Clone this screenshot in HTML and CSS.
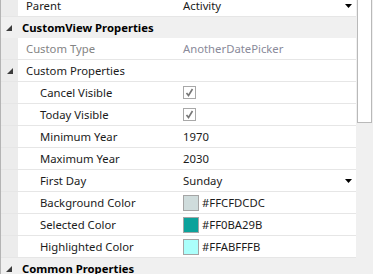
FILE: index.html
```html
<!DOCTYPE html>
<html lang="en">
<head>
    <meta charset="UTF-8">
    <title>Properties</title>
    <link rel="stylesheet" href="styles.css">
</head>
<body>
<div class="property-grid">
    <div class="rows">
        <div class="row">
            <span class="gutter"></span>
            <span class="name">Parent</span>
            <span class="value">Activity<svg class="drop" width="7" height="4"><polygon points="0,0 7,0 3.5,4"/></svg></span>
        </div>
        <div class="category">
            <svg class="expander" width="6" height="6"><polygon points="6,0 6,6 0,6"/></svg>
            <span>CustomView Properties</span>
        </div>
        <div class="row readonly">
            <span class="gutter"></span>
            <span class="name">Custom Type</span>
            <span class="value">AnotherDatePicker</span>
        </div>
        <div class="row sub-category">
            <span class="gutter"><svg class="expander" width="6" height="6"><polygon points="6,0 6,6 0,6"/></svg></span>
            <span class="name">Custom Properties</span>
            <span class="value"></span>
        </div>
        <div class="row nested">
            <span class="gutter"></span>
            <span class="name">Cancel Visible</span>
            <span class="value"><span class="checkbox"><svg width="9" height="9"><path d="M1.5 5 L3.5 7.5 L7.5 1"/></svg></span></span>
        </div>
        <div class="row nested">
            <span class="gutter"></span>
            <span class="name">Today Visible</span>
            <span class="value"><span class="checkbox"><svg width="9" height="9"><path d="M1.5 5 L3.5 7.5 L7.5 1"/></svg></span></span>
        </div>
        <div class="row nested">
            <span class="gutter"></span>
            <span class="name">Minimum Year</span>
            <span class="value">1970</span>
        </div>
        <div class="row nested">
            <span class="gutter"></span>
            <span class="name">Maximum Year</span>
            <span class="value">2030</span>
        </div>
        <div class="row nested">
            <span class="gutter"></span>
            <span class="name">First Day</span>
            <span class="value">Sunday<svg class="drop" width="7" height="4"><polygon points="0,0 7,0 3.5,4"/></svg></span>
        </div>
        <div class="row nested">
            <span class="gutter"></span>
            <span class="name">Background Color</span>
            <span class="value"><span class="swatch" style="background: #CFDCDC"></span>#FFCFDCDC</span>
        </div>
        <div class="row nested">
            <span class="gutter"></span>
            <span class="name">Selected Color</span>
            <span class="value"><span class="swatch" style="background: #0BA29B"></span>#FF0BA29B</span>
        </div>
        <div class="row nested">
            <span class="gutter"></span>
            <span class="name">Highlighted Color</span>
            <span class="value"><span class="swatch" style="background: #ABFFFB"></span>#FFABFFFB</span>
        </div>
        <div class="category">
            <svg class="expander" width="6" height="6"><polygon points="6,0 6,6 0,6"/></svg>
            <span>Common Properties</span>
        </div>
    </div>
    <div class="scrollbar">
        <div class="thumb"></div>
    </div>
</div>
</body>
</html>
```

FILE: styles.css
```css
body {
    margin: 0;
    font-family: "Noto Sans", sans-serif;
    font-size: 11.3px;
    color: #1b1b1b;
    background-color: #f0f0f0;
    overflow: hidden;
}

.property-grid {
    display: flex;
    width: 373px;
    height: 274px;
    overflow: hidden;
}

.rows {
    width: 356px;
    margin-top: -5px;
    border-left: 1px solid #b4b4b4;
    box-sizing: border-box;
}

.row {
    display: flex;
    height: 22px;
    border-bottom: 1px solid #e6e6e6;
    box-sizing: border-box;
    background-color: #fff;
}

.gutter {
    width: 17px;
    flex: none;
    background-color: #ececec;
    display: flex;
    align-items: center;
    justify-content: center;
}

.name {
    width: 162px;
    flex: none;
    padding-left: 8px;
    box-sizing: border-box;
    display: flex;
    align-items: center;
    white-space: nowrap;
}

.nested .name {
    padding-left: 22px;
}

.value {
    flex: 1;
    display: flex;
    align-items: center;
    padding-left: 3px;
    padding-right: 4px;
    white-space: nowrap;
}

.value .drop {
    margin-left: auto;
    fill: #000;
}

.readonly .name {
    color: #848484;
}

.readonly .value {
    color: #8a8a9a;
}

.category {
    display: flex;
    align-items: center;
    height: 21px;
    background-color: #f0f0f0;
    font-weight: bold;
    color: #000;
}

.expander {
    fill: #3c3c3c;
}

.category .expander {
    margin: 0 10px 0 5px;
}

.checkbox {
    width: 11px;
    height: 11px;
    border: 1px solid #a8a8a8;
    background-color: #fff;
    display: flex;
    align-items: center;
    justify-content: center;
}

.checkbox path {
    fill: none;
    stroke: #777;
    stroke-width: 1.6;
}

.swatch {
    width: 14px;
    height: 14px;
    border: 1px solid #a5a5a5;
    margin-right: 3px;
}

.scrollbar {
    width: 17px;
    flex: none;
    background-color: #f0f0f0;
}

.thumb {
    width: 13px;
    height: 125px;
    margin: -4px 0 0 1px;
    border: 1px solid #b9b9b9;
    background-color: #fff;
}
```
